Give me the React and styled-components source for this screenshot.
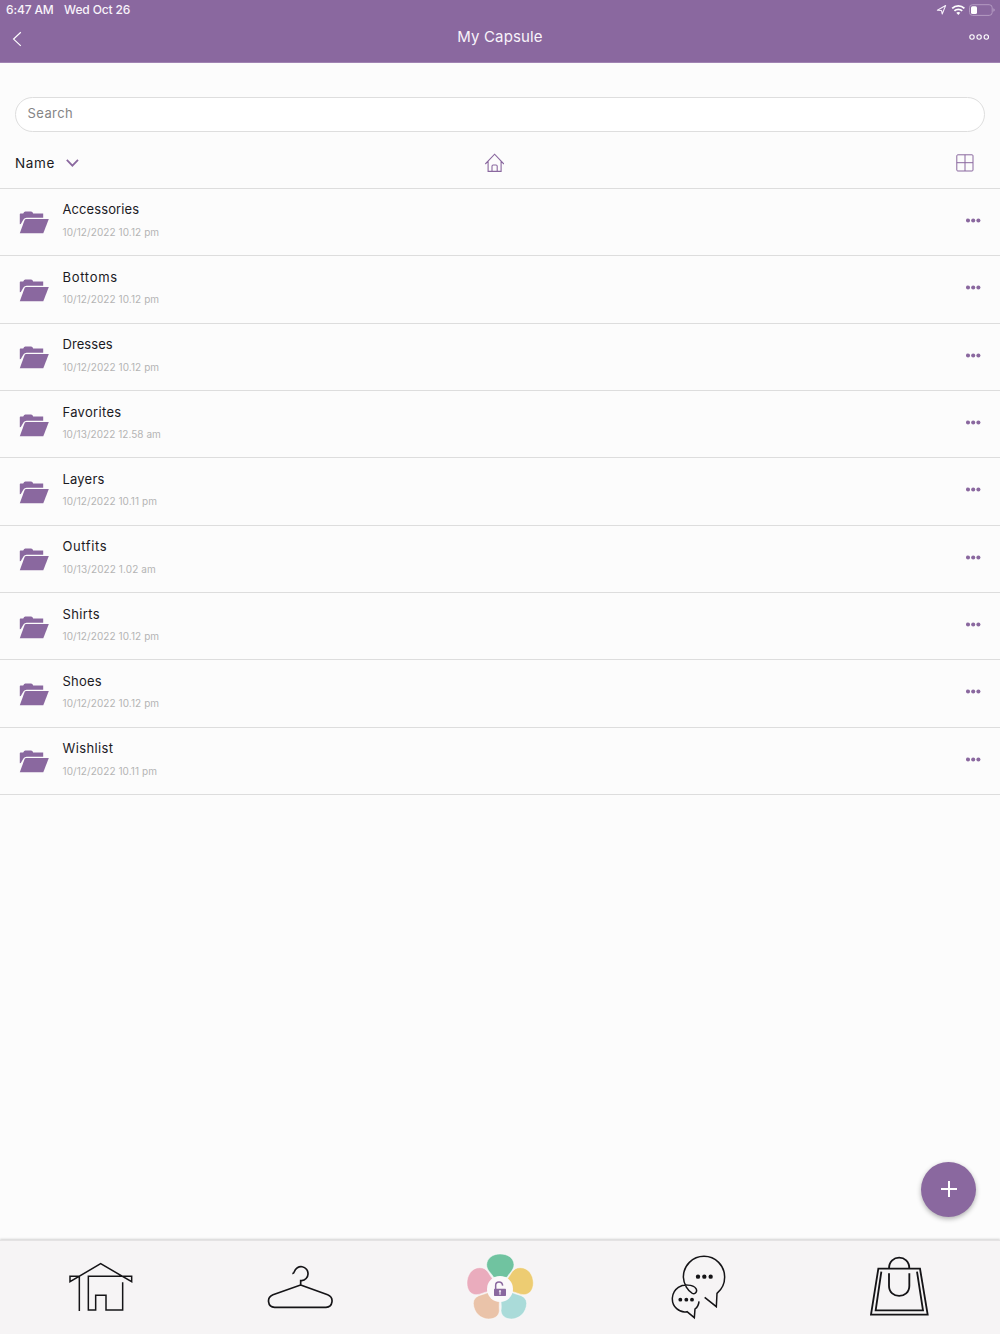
import React from 'react';
import styled, { createGlobalStyle } from 'styled-components';

const purple = '#8a689f';

const GlobalStyle = createGlobalStyle`
  * { box-sizing: border-box; }
  body { margin: 0; background: #fcfcfc; font-family: Inter, "Liberation Sans", sans-serif; }
`;

const Screen = styled.div`
  height: 1334px;
  display: flex;
  flex-direction: column;
  overflow: hidden;
  color: #1b1a1f;
`;

const Header = styled.header`
  height: 63px;
  flex: none;
  background: ${purple};
  border-bottom: 1px solid #a184b3;
  color: #f8f3fa;
`;

const StatusBar = styled.div`
  height: 20px;
  display: flex;
  justify-content: space-between;
  padding: 0 6px;
  font-size: 12px;
  font-weight: 500;
  line-height: 20px;
`;

const StatusGroup = styled.div`
  display: flex;
  gap: 10.5px;
  letter-spacing: -0.14px;
`;

const StatusIcons = styled.svg`
  display: block;
  width: 70px;
  height: 20px;
  margin-right: -6px;
`;

const NavBar = styled.div`
  height: 36px;
  display: grid;
  grid-template-columns: 1fr auto 1fr;
  align-items: center;
  padding: 0 10px;
`;

const Title = styled.h1`
  margin: 0;
  padding-bottom: 2px;
  font-size: 15px;
  font-weight: 400;
  line-height: 34px;
  letter-spacing: 0.15px;
`;

const NavIcon = styled.svg`
  display: block;
  width: ${(p) => p.$w}px;
  height: ${(p) => p.$h}px;
  margin-top: ${(p) => p.$drop || 0}px;
  justify-self: ${(p) => p.$side};
`;

const SearchField = styled.div`
  height: 35px;
  flex: none;
  margin: 34px 15px 0;
  padding: 0 11.5px;
  border: 1px solid #dedede;
  border-radius: 18px;
  background: #fff;
  color: #858585;
  font-size: 13px;
  line-height: 31px;
  letter-spacing: 0.42px;
`;

const SortBar = styled.div`
  height: 56.8px;
  flex: none;
  display: grid;
  grid-template-columns: 1fr auto 1fr;
  align-items: center;
  padding: 7px 26.5px 0 15px;
  border-bottom: 1px solid #dddddd;
`;

const SortButton = styled.div`
  display: flex;
  align-items: center;
  gap: 11px;
  font-size: 13.5px;
  letter-spacing: 0.6px;
`;

const ToolIcon = styled.svg`
  display: block;
  width: ${(p) => p.$w}px;
  height: ${(p) => p.$h}px;
  justify-self: ${(p) => p.$side || 'center'};
`;

const List = styled.ul`
  flex: 1;
  margin: 0;
  padding: 0;
  list-style: none;
`;

const Row = styled.li`
  height: 67.37px;
  display: flex;
  align-items: flex-start;
  padding: 0 19.5px 0 19px;
  border-bottom: 1px solid #dddddd;
`;

const FolderSvg = styled.svg`
  display: block;
  width: 30px;
  height: 23px;
  margin: 22.7px 13.5px 0 0;
`;

const RowText = styled.div`
  flex: 1;
  padding-top: 11.7px;
`;

const RowName = styled.div`
  font-size: 13px;
  line-height: 18px;
  letter-spacing: ${(p) => p.$track}px;
`;

const RowDate = styled.div`
  margin-top: 5.3px;
  color: #b4b4b4;
  font-size: 10px;
  line-height: 16px;
  letter-spacing: ${(p) => p.$track}px;
`;

const DotsSvg = styled.svg`
  display: block;
  width: 15px;
  height: 5px;
  margin-top: 29.1px;
`;

const AddButton = styled.button`
  position: absolute;
  left: 921px;
  top: 1161.6px;
  width: 55px;
  height: 55px;
  padding: 0;
  display: grid;
  place-items: center;
  border: 0;
  border-radius: 50%;
  background: ${purple};
  box-shadow: 0 2px 5px rgba(0, 0, 0, 0.3);
`;

const TabBar = styled.nav`
  height: 94px;
  flex: none;
  display: grid;
  grid-template-columns: repeat(5, 1fr);
  justify-items: center;
  background: #f6f4f5;
  border-top: 1px solid #e4e2e3;
  box-shadow: 0 -1px 2px rgba(0, 0, 0, 0.17);
`;

const TabIcon = styled.svg`
  display: block;
  width: ${(p) => p.$w}px;
  height: 94px;
  margin-top: -1px;
  fill: none;
  stroke: #151417;
  stroke-width: ${(p) => p.$stroke || 4.5};
`;

const folders = [
  { name: 'Accessories', date: '10/12/2022 10.12 pm', track: 0.1, dateTrack: 0.08 },
  { name: 'Bottoms', date: '10/12/2022 10.12 pm', track: 0.7, dateTrack: 0.08 },
  { name: 'Dresses', date: '10/12/2022 10.12 pm', track: 0.06, dateTrack: 0.08 },
  { name: 'Favorites', date: '10/13/2022 12.58 am', track: 0.32, dateTrack: 0.04 },
  { name: 'Layers', date: '10/12/2022 10.11 pm', track: 0.2, dateTrack: 0.07 },
  { name: 'Outfits', date: '10/13/2022 1.02 am', track: 0.6, dateTrack: 0.1 },
  { name: 'Shirts', date: '10/12/2022 10.12 pm', track: 0.38, dateTrack: 0.08 },
  { name: 'Shoes', date: '10/12/2022 10.12 pm', track: 0.22, dateTrack: 0.08 },
  { name: 'Wishlist', date: '10/12/2022 10.11 pm', track: 0.38, dateTrack: 0.07 },
];

const Folder = () => (
  <FolderSvg viewBox="0 0 30 23" fill={purple}>
    <path d="M.8 13.2V3.3Q.8 2.6 1.5 2.6H4.2Q5 .6 6.4 .6H12Q13.6 .6 14.2 2.6H24.2V6.7H7.6Q5.5 6.7 4.6 8.2L1.8 12.9Z" />
    <path d="M7.2 8H29.8L24.3 22.2H.8L5.6 9Q6 8 7.2 8Z" />
  </FolderSvg>
);

const Dots = () => (
  <DotsSvg viewBox="0 0 15 5" fill={purple}>
    <circle cx="2" cy="2.5" r="2.05" />
    <circle cx="7.2" cy="2.5" r="2.05" />
    <circle cx="12.4" cy="2.5" r="2.05" />
  </DotsSvg>
);

const petals = [
  { color: '#70c3a0', d: 'M131 112C123 98 110 91 110 74C111 53 130 42 150 42C173 42 191 53 192 74C191 91 178 99 171 112Z' },
  { color: '#edcc72', d: 'M173 115C184 103 187 83 211 83C237 83 250 108 250 129C250 150 238 164 222 164C208 164 199 157 187 155Z' },
  { color: '#aadbd9', d: 'M187 158C202 166 229 164 230 190C229 219 207 237 184 237C165 237 153 226 153 211C155 199 153 192 153 182Z' },
  { color: '#eac3a9', d: 'M113 158C98 166 71 164 70 190C71 219 93 237 116 237C136 237 148 226 148 211C147 199 148 192 148 182Z' },
  { color: '#eaacbd', d: 'M127 115C116 103 113 83 89 83C64 83 51 108 51 129C51 150 62 164 78 164C92 164 101 157 113 155Z' },
];

export default function App() {
  return (
    <Screen>
      <GlobalStyle />
      <Header>
        <StatusBar>
          <StatusGroup>
            <span>6:47 AM</span>
            <span>Wed Oct 26</span>
          </StatusGroup>
          <StatusIcons viewBox="-10 0 70 20" fill="none">
            <path d="M-2.6 10.2L5.6 5.6L2.2 14L1.5 10.5Z" stroke="#f6effa" strokeWidth="1.1" strokeLinejoin="round" />
            <g stroke="#fff" strokeWidth="1.8">
              <path d="M12.2 8.4A8.7 8.7 0 0 1 24.4 8.4" />
              <path d="M14.4 10.9A5.6 5.6 0 0 1 22.2 10.9" />
            </g>
            <path d="M16.3 12.8Q18.3 11 20.3 12.8L18.3 14.9Z" fill="#fff" />
            <rect x="29.5" y="4.7" width="22.7" height="10.7" rx="3" stroke="#b49bc2" />
            <rect x="31" y="6.2" width="6" height="7.7" rx="1.5" fill="#fff" />
            <path d="M53.3 8.2Q54.8 8.8 54.8 10T53.3 11.8Z" fill="#b49bc2" />
          </StatusIcons>
        </StatusBar>
        <NavBar>
          <NavIcon $w={12} $h={16} $drop={2} $side="start" viewBox="-2 0 12 16">
            <path d="M8.8 1.3L1.6 8.1L8.8 14.9" fill="none" stroke="#fff" strokeWidth="1.2" />
          </NavIcon>
          <Title>My Capsule</Title>
          <NavIcon $w={22} $h={8} $drop={-2} $side="end" viewBox="0 0 22 8" fill="none" stroke="#fff" strokeWidth="1.1">
            <circle cx="4" cy="4" r="2.2" />
            <circle cx="11.1" cy="4" r="2.2" />
            <circle cx="18.3" cy="4" r="2.2" />
          </NavIcon>
        </NavBar>
      </Header>
      <SearchField>Search</SearchField>
      <SortBar>
        <SortButton>
          <span>Name</span>
          <ToolIcon $w={13} $h={8} viewBox="0 0 13 8">
            <path d="M.8 .9L6.4 6.6L12 .9" fill="none" stroke={purple} strokeWidth="1.8" />
          </ToolIcon>
        </SortButton>
        <ToolIcon $w={20} $h={20} viewBox="-.6 0 20 20" fill="none" stroke={purple} strokeWidth="1.1">
          <path d="M.7 11L10 1.2L19.3 11M3.5 8.3V18.4H16.5V8.3M7.4 18.4V13.2Q7.4 12 8.6 12H11.4Q12.6 12 12.6 13.2V18.4" />
        </ToolIcon>
        <ToolIcon $w={18} $h={18} $side="end" viewBox="0 0 18 18" fill="none" stroke={purple} strokeWidth="1">
          <rect x=".8" y=".8" width="16.2" height="16.2" rx="1" />
          <path d="M9 .8V17M.8 8.7H17" />
        </ToolIcon>
      </SortBar>
      <List>
        {folders.map((f) => (
          <Row key={f.name}>
            <Folder />
            <RowText>
              <RowName $track={f.track}>
                <span>{f.name}</span>
              </RowName>
              <RowDate $track={f.dateTrack}>
                <span>{f.date}</span>
              </RowDate>
            </RowText>
            <Dots />
          </Row>
        ))}
      </List>
      <TabBar>
        <TabIcon $w={100} viewBox="0 0 300 282">
          <path d="M88 213V109H60V125L152 71L245 125V109H115V210H137V166H168V210H218V127" />
        </TabIcon>
        <TabIcon $w={90} viewBox="0 0 270 282" $stroke={5}>
          <path d="M112 101Q117 100 118 95A21 21 0 1 1 140 122H137V135L54 164C34 172 37 201 59 202H213C234 201 238 172 218 164L137 135" />
        </TabIcon>
        <TabIcon $w={100} viewBox="0 0 300 282">
          {petals.map((p) => (
            <path key={p.color} d={p.d} fill={p.color} stroke="#fbfafa" strokeWidth="1.5" />
          ))}
          <circle cx="150" cy="147" r="39" fill="#fbf9fa" stroke="none" />
          <rect x="132" y="146" width="36" height="22" rx="2" fill={purple} stroke="none" />
          <path d="M137 147V136Q137 126 147 126Q157 126 158 137" stroke={purple} strokeWidth="4.5" />
          <path d="M150 150A4 4 0 0 1 152 157V164H148V157A4 4 0 0 1 150 150Z" fill="#e7ddeb" stroke="none" />
        </TabIcon>
        <TabIcon $w={90} viewBox="0 0 270 282">
          <path d="M149 172L184 200L186 160C203 146 209 128 209 111A62 62 0 0 0 85 111C86 134 99 153 112 160C121 164 128 154 123 146C114 132 84 133 70 142C48 157 46 189 65 206C75 215 87 217 96 215L118 233L120 207Q131 199 132 184" />
          <g fill="#151417" stroke="none">
            <circle cx="129" cy="110" r="6.5" />
            <circle cx="148" cy="110" r="6.5" />
            <circle cx="167" cy="110" r="6.5" />
            <circle cx="76" cy="179" r="5.8" />
            <circle cx="94" cy="179" r="5.8" />
            <circle cx="111" cy="179" r="5.8" />
          </g>
        </TabIcon>
        <TabIcon $w={90} viewBox="0 0 270 282" $stroke={5.5}>
          <path d="M79 95L62 211H204L186 95M48 224L70 86H195L218 224ZM102 86C102 42 163 42 163 86M102 100V137C102 178 163 178 163 137V100" />
        </TabIcon>
      </TabBar>
      <AddButton aria-label="Add">
        <ToolIcon $w={16} $h={16} viewBox="0 0 16 16">
          <path d="M8 0V16M0 8H16" stroke="#fff" strokeWidth="2" />
        </ToolIcon>
      </AddButton>
    </Screen>
  );
}
